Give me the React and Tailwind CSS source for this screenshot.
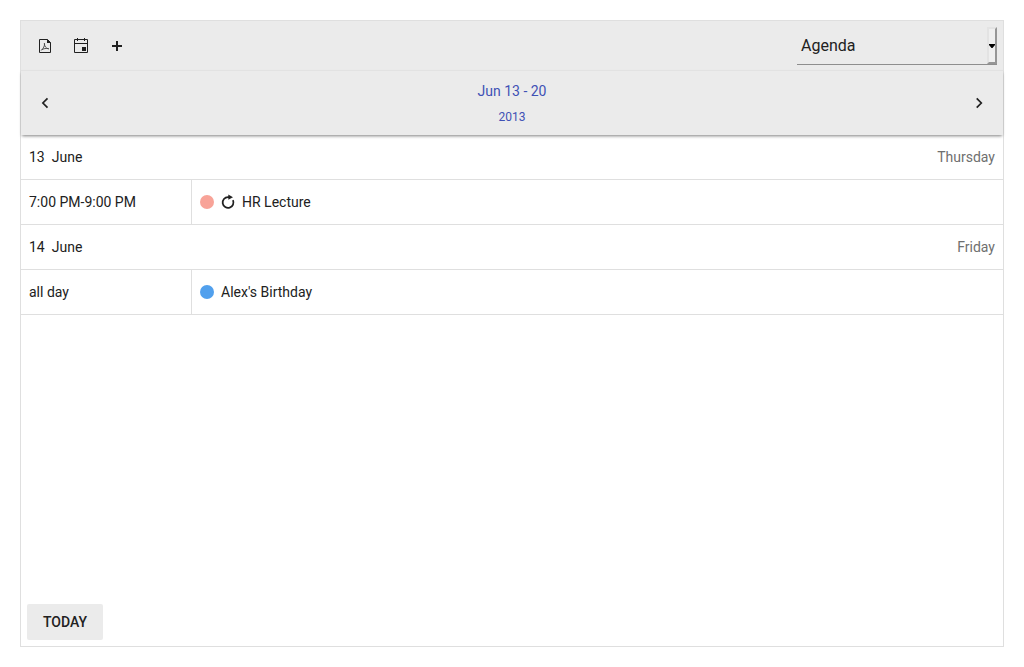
const days = [
  { day: '13', month: 'June', weekday: 'Thursday', time: '7:00 PM-9:00 PM', title: 'HR Lecture', dot: 'bg-[#f8a398]', recurring: true },
  { day: '14', month: 'June', weekday: 'Friday', time: 'all day', title: "Alex's Birthday", dot: 'bg-[#51a0ed]', recurring: false },
];

function PdfIcon() {
  return (
    <svg width="16" height="16" viewBox="0 0 16 16" fill="none" stroke="#212121">
      <path d="M2.5 1.5H10.5L13.5 4.5V14.5H2.5Z" strokeLinejoin="round" />
      <path d="M10 1V5H14Z" fill="#212121" stroke="none" />
      <path d="M7.4 5.2C8 7.6 6.4 10.6 4.2 12.4M7.4 5.2C7.2 8 9 10.6 11.8 11M4.6 11.8C6.6 10.6 9 10.1 11.8 10.6" stroke="#444" strokeWidth=".9" />
    </svg>
  );
}

function CalendarIcon() {
  return (
    <svg width="16" height="16" viewBox="0 0 16 16" fill="#212121">
      <path fillRule="evenodd" d="M2 1H14Q15 1 15 2V14Q15 15 14 15H2Q1 15 1 14V2Q1 1 2 1ZM2 6V14H14V6ZM2 2V5H14V2Z" />
      <path d="M4 0H5V3H4ZM11 0H12V3H11ZM9 9H13V13H9Z" />
    </svg>
  );
}

function PlusIcon() {
  return (
    <svg width="16" height="16" viewBox="0 0 16 16" fill="#212121">
      <path d="M7 3H9V7H13V9H9V13H7V9H3V7H7Z" />
    </svg>
  );
}

function Chevron({ right }) {
  return (
    <svg width="16" height="16" viewBox="0 0 16 16" fill="none" stroke="#212121" strokeWidth="1.7">
      <path d={right ? 'M5.7 3.4L10.3 8L5.7 12.6' : 'M10.5 3.4L5.9 8L10.5 12.6'} />
    </svg>
  );
}

function RepeatIcon() {
  return (
    <svg width="14" height="16" viewBox="0 0 14 16" fill="none">
      <path d="M8 3.1H7A5.4 5.4 0 1 0 11.9 6.1" stroke="#212121" strokeWidth="1.8" />
      <path d="M7.3 .6L12 3.2L7.3 5.8Z" fill="#212121" />
    </svg>
  );
}

export default function App() {
  return (
    <div className="h-[667px] bg-white px-5 pt-5 font-[Roboto,sans-serif] text-sm leading-[21px] text-[#212121]">
      <div className="flex h-[627px] flex-col border border-[#dfdfdf]">
        <div className="flex h-[49px] shrink-0 items-start justify-between bg-[#ebebeb] pr-1.5">
          <div className="flex gap-5 pt-[17px] pl-4">
            <PdfIcon />
            <CalendarIcon />
            <PlusIcon />
          </div>
          <div className="mt-[6px] flex h-[38px] w-[200px] border-b border-[#8e8e8e]">
            <span className="flex-1 pt-2 pl-1 text-base leading-[21px]">Agenda</span>
            <span className="flex h-[37px] w-[10px] items-center justify-center border-2 border-t-[#e3e3e3] border-r-[#969696] border-b-[#969696] border-l-[#e3e3e3] bg-[#efefef]">
              <svg className="mt-px shrink-0" width="6" height="4" viewBox="0 0 6 4" fill="#000">
                <path d="M0 0H6V1L3.5 4H2.5L0 1Z" />
              </svg>
            </span>
          </div>
        </div>
        <div className="flex h-[65px] shrink-0 items-center justify-between border-t border-[#e2e2e2] bg-[#ebebeb] px-4 shadow-[0_2px_3px_-1px_rgba(0,0,0,0.5)]">
          <Chevron />
          <div className="pt-px text-center text-[#3f51b5]">
            <div className="pt-px text-sm leading-[26px]">Jun 13 - 20</div>
            <div className="text-xs leading-[26px]">2013</div>
          </div>
          <Chevron right />
        </div>
        {days.map((item) => (
          <div key={item.day}>
            <div className="flex h-[45px] items-center justify-between border-b border-[#dfdfdf] px-2">
              <div className="flex gap-[7px]">
                <span>{item.day}</span>
                <span>{item.month}</span>
              </div>
              <span className="text-[#6f6f6f]">{item.weekday}</span>
            </div>
            <div className="flex h-[45px] border-b border-[#dfdfdf]">
              <div className="flex w-[171px] items-center border-r border-[#dfdfdf] pl-2">{item.time}</div>
              <div className="flex items-center gap-[7px] pl-2">
                <span className={`size-3.5 rounded-full ${item.dot}`} />
                {item.recurring && <RepeatIcon />}
                <span>{item.title}</span>
              </div>
            </div>
          </div>
        ))}
        <button className="mt-auto mb-1.5 ml-1.5 h-9 w-[76px] shrink-0 rounded-xs bg-[#ebebeb] font-medium">TODAY</button>
      </div>
    </div>
  );
}
